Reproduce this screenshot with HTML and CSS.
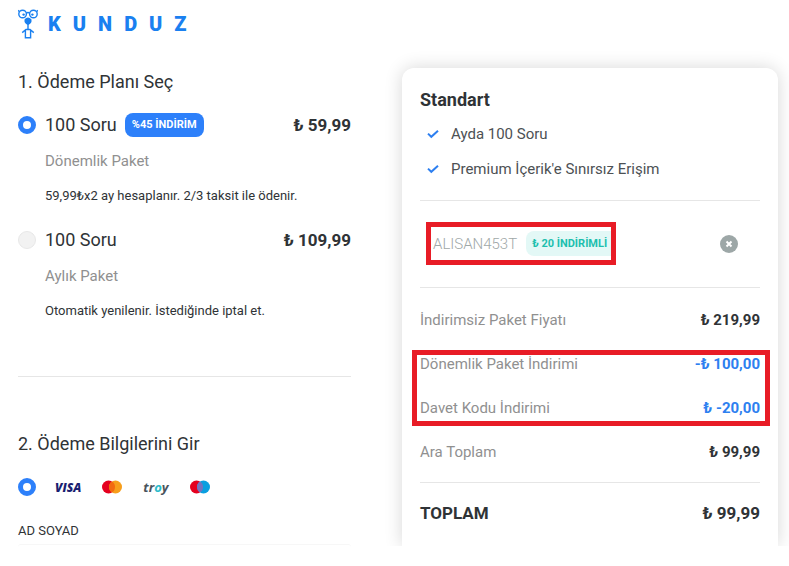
FILE: index.html
```html
<!DOCTYPE html>
<html lang="tr">
<head>
    <meta charset="UTF-8">
    <meta name="viewport" content="width=device-width, initial-scale=1.0">
    <title>Kunduz</title>
    <link rel="stylesheet" href="styles.css">
</head>
<body>

    <!-- Header -->
    <header class="header">
        <a class="logo" href="#">
            <svg class="logo-icon" width="20" height="30" viewBox="0 0 20 30" fill="none" stroke="#1a80f0" stroke-width="1.4">
                <circle cx="4.6" cy="5" r="3.8"/>
                <circle cx="15.4" cy="5" r="3.8"/>
                <path d="M8.3 4.2Q10 2.8 11.7 4.2M1.2 2.4L0 1.4M18.8 2.4L20 1.4"/>
                <circle cx="5.6" cy="5.6" r="1.2" fill="#1a80f0" stroke="none"/>
                <circle cx="14.4" cy="5.6" r="1.2" fill="#1a80f0" stroke="none"/>
                <path d="M6.6 10.2Q10 6.6 13.4 10.2Q14.4 14.4 10 16Q5.6 14.4 6.6 10.2Z" fill="#1a80f0" stroke="none"/>
                <path d="M10 14.5V20.5M4.2 23.6L8 20.5H12L15.8 23.6M7.4 21V28.8H12.6V21"/>
            </svg>
            <span class="logo-text">KUNDUZ</span>
        </a>
    </header>

    <main class="container">

        <!-- Payment form -->
        <form class="payment">
            <h2>1. Ödeme Planı Seç</h2>

            <div class="plans">
                <div class="plan">
                    <div class="plan-title">
                        <input type="radio" name="plan" id="planTerm" checked>
                        <label for="planTerm">100 Soru</label>
                        <span class="badge">%45 İNDİRİM</span>
                        <strong class="plan-price">₺ 59,99</strong>
                    </div>
                    <p class="plan-type">Dönemlik Paket</p>
                    <p class="plan-note">59,99₺x2 ay hesaplanır. 2/3 taksit ile ödenir.</p>
                </div>

                <div class="plan">
                    <div class="plan-title">
                        <input type="radio" name="plan" id="planMonth">
                        <label for="planMonth">100 Soru</label>
                        <strong class="plan-price">₺ 109,99</strong>
                    </div>
                    <p class="plan-type">Aylık Paket</p>
                    <p class="plan-note">Otomatik yenilenir. İstediğinde iptal et.</p>
                </div>
            </div>

            <h2>2. Ödeme Bilgilerini Gir</h2>

            <div class="cards">
                <input type="radio" name="method" id="methodCard" checked>
                <label class="card-logos" for="methodCard">
                    <span class="visa">VISA</span>
                    <svg width="20" height="14" viewBox="0 0 20 14">
                        <circle cx="6.5" cy="7" r="6.5" fill="#e5001f"/>
                        <circle cx="13.5" cy="7" r="6.5" fill="#f79e1b"/>
                        <path d="M10 1.5a6.5 6.5 0 0 1 0 11a6.5 6.5 0 0 1 0-11z" fill="#f26a10"/>
                    </svg>
                    <span class="troy">tr<span class="troy-o">o</span>y</span>
                    <svg width="20" height="14" viewBox="0 0 20 14">
                        <circle cx="6.5" cy="7" r="6.5" fill="#e5001f"/>
                        <circle cx="13.5" cy="7" r="6.5" fill="#0a9fe0"/>
                        <path d="M10 1.5a6.5 6.5 0 0 1 0 11a6.5 6.5 0 0 1 0-11z" fill="#7672bd"/>
                    </svg>
                </label>
            </div>

            <label class="field-label" for="fullName">AD SOYAD</label>
            <input class="field" type="text" id="fullName">
        </form>

        <!-- Order summary -->
        <aside class="summary">
            <h3>Standart</h3>
            <ul class="features">
                <li>
                    <svg width="12" height="10" viewBox="0 0 12 10" fill="none" stroke="#2d7ff0" stroke-width="2"><path d="M1 3.6L4.3 6.8L11 0.8"/></svg>
                    Ayda 100 Soru
                </li>
                <li>
                    <svg width="12" height="10" viewBox="0 0 12 10" fill="none" stroke="#2d7ff0" stroke-width="2"><path d="M1 3.6L4.3 6.8L11 0.8"/></svg>
                    Premium İçerik'e Sınırsız Erişim
                </li>
            </ul>

            <div class="coupon">
                <div class="coupon-box">
                    <span class="coupon-code">ALISAN453T</span>
                    <span class="coupon-badge">₺ 20 İNDİRİMLİ</span>
                </div>
                <button class="coupon-remove" type="button" aria-label="Kodu sil">
                    <svg width="8" height="8" viewBox="0 0 8 8" stroke="#fff" stroke-width="2"><path d="M1.5 1.5L6.5 6.5M6.5 1.5L1.5 6.5"/></svg>
                </button>
            </div>

            <dl class="prices">
                <div class="price-row">
                    <dt>İndirimsiz Paket Fiyatı</dt>
                    <dd>₺ 219,99</dd>
                </div>
                <div class="price-row discount">
                    <dt>Dönemlik Paket İndirimi</dt>
                    <dd>-₺ 100,00</dd>
                </div>
                <div class="price-row discount">
                    <dt>Davet Kodu İndirimi</dt>
                    <dd>₺ -20,00</dd>
                </div>
                <div class="price-row">
                    <dt>Ara Toplam</dt>
                    <dd>₺ 99,99</dd>
                </div>
                <div class="highlight"></div>
            </dl>

            <div class="total">
                <span>TOPLAM</span>
                <span>₺ 99,99</span>
            </div>
        </aside>
    </main>

</body>
</html>
```

FILE: styles.css
```css
* {
    box-sizing: border-box;
}

/* body */
body {
    font-family: Roboto, "Liberation Sans", sans-serif;
    margin: 0;
    background-color: #fff;
    color: #2f3336;
}

h2, h3, p, ul, dl, dd {
    margin: 0;
    padding: 0;
}

/* Header */
.header {
    display: flex;
    padding: 9px 18px 0;
}

.logo {
    display: flex;
    align-items: center;
    gap: 10px;
    text-decoration: none;
}

.logo-text {
    color: #1a80f0;
    font-size: 20px;
    line-height: 30px;
    font-weight: 900;
    letter-spacing: 12px;
}

/* Container */
.container {
    display: grid;
    grid-template-columns: 333fr 376fr;
    gap: 51px;
    align-items: start;
    padding: 29px 11px 20px 18px;
}

h2 {
    font-size: 18px;
    line-height: 28px;
    font-weight: 400;
}

/* Radio buttons */
input[type="radio"] {
    appearance: none;
    flex: none;
    width: 18px;
    height: 18px;
    margin: 0;
    border: 1px solid #e8e8e8;
    border-radius: 50%;
    background-color: #f2f2f2;
}

input[type="radio"]:checked {
    border: 5px solid #2d80fa;
    background-color: #fff;
}

/* Plans */
.plans {
    display: flex;
    flex-direction: column;
    gap: 9px;
    margin-bottom: 53px;
    padding: 11px 0 48px;
    border-bottom: 1px solid #e6e6e6;
}

.plan-title {
    display: flex;
    align-items: center;
    gap: 8px;
    font-size: 18px;
    line-height: 36px;
}

.plan-title input {
    margin-right: 1px;
}

.badge {
    padding: 0 7px;
    border-radius: 8px;
    background-color: #2d80fa;
    color: #fff;
    font-size: 11px;
    line-height: 24px;
    font-weight: 700;
}

.plan-price {
    margin-left: auto;
    font-size: 17px;
    font-weight: 700;
}

.plan-type {
    padding-left: 27px;
    color: #909090;
    font-size: 15px;
    line-height: 36px;
}

.plan-note {
    padding-left: 27px;
    font-size: 13px;
    line-height: 34px;
}

/* Card logos */
.cards {
    display: flex;
    align-items: center;
    gap: 19px;
    height: 18px;
    margin: 20px 0 25px;
}

.card-logos {
    display: flex;
    align-items: center;
    gap: 21px;
}

.visa {
    color: #1a1f71;
    font-family: "Open Sans", sans-serif;
    font-size: 12px;
    font-style: italic;
    font-weight: 800;
}

.troy {
    color: #4a545c;
    font-family: "Open Sans", sans-serif;
    font-size: 13px;
    line-height: 18px;
    font-style: italic;
    font-weight: 700;
}

.troy-o {
    color: #2cbccb;
}

.field-label {
    display: block;
    font-size: 13px;
    line-height: 20px;
}

.field {
    display: block;
    width: 100%;
    height: 6px;
    margin-top: 3px;
    padding: 0;
    border: none;
    border-top: 1px solid #f7f7f7;
    border-radius: 6px;
    outline: none;
}

/* Summary */
.summary {
    padding: 18px 18px 15px;
    border-radius: 12px 12px 0 0;
    background-color: #fff;
    box-shadow: 0 0 18px rgba(0, 0, 0, 0.16);
    clip-path: inset(-30px -30px 0 -30px);
}

.summary h3 {
    font-size: 18px;
    line-height: 28px;
    font-weight: 700;
}

.features {
    padding: 3px 0 13px;
    list-style: none;
}

.features li {
    display: flex;
    align-items: center;
    gap: 12px;
    padding-left: 7px;
    color: #4d5154;
    font-size: 15px;
    line-height: 35px;
}

/* Coupon */
.coupon {
    display: flex;
    align-items: center;
    justify-content: space-between;
    padding: 21px 22px 22px 6px;
    border-top: 1px solid #e6e6e6;
    border-bottom: 1px solid #e6e6e6;
}

.coupon-box {
    display: flex;
    align-items: center;
    gap: 9px;
    height: 43px;
    padding: 0 0 0 2px;
    border: 5px solid #e81c26;
}

.coupon-code {
    color: #a0a8a8;
    font-size: 15px;
    font-weight: 300;
}

.coupon-badge {
    padding: 0 4px 0 6px;
    border-radius: 8px 0 0 8px;
    background-color: #e3f8f6;
    color: #1dbfae;
    font-size: 11px;
    line-height: 25px;
    font-weight: 700;
}

.coupon-remove {
    display: flex;
    align-items: center;
    justify-content: center;
    width: 18px;
    height: 18px;
    padding: 0;
    border: none;
    border-radius: 50%;
    background-color: #9da7a7;
    cursor: pointer;
}

/* Prices */
.prices {
    position: relative;
    padding: 10px 0 8px;
    border-bottom: 1px solid #e6e6e6;
}

.price-row {
    display: flex;
    justify-content: space-between;
    font-size: 15px;
    line-height: 44px;
}

.price-row dt {
    color: #909090;
}

.price-row dd {
    font-weight: 700;
}

.discount dd {
    color: #2d80f0;
}

/* Frame over the discount rows */
.highlight {
    position: absolute;
    top: 62px;
    right: -10px;
    bottom: 56px;
    left: -8px;
    border: 5px solid #e81c26;
}

.total {
    display: flex;
    justify-content: space-between;
    padding-top: 12px;
    font-size: 17px;
    line-height: 36px;
    font-weight: 700;
}
```
